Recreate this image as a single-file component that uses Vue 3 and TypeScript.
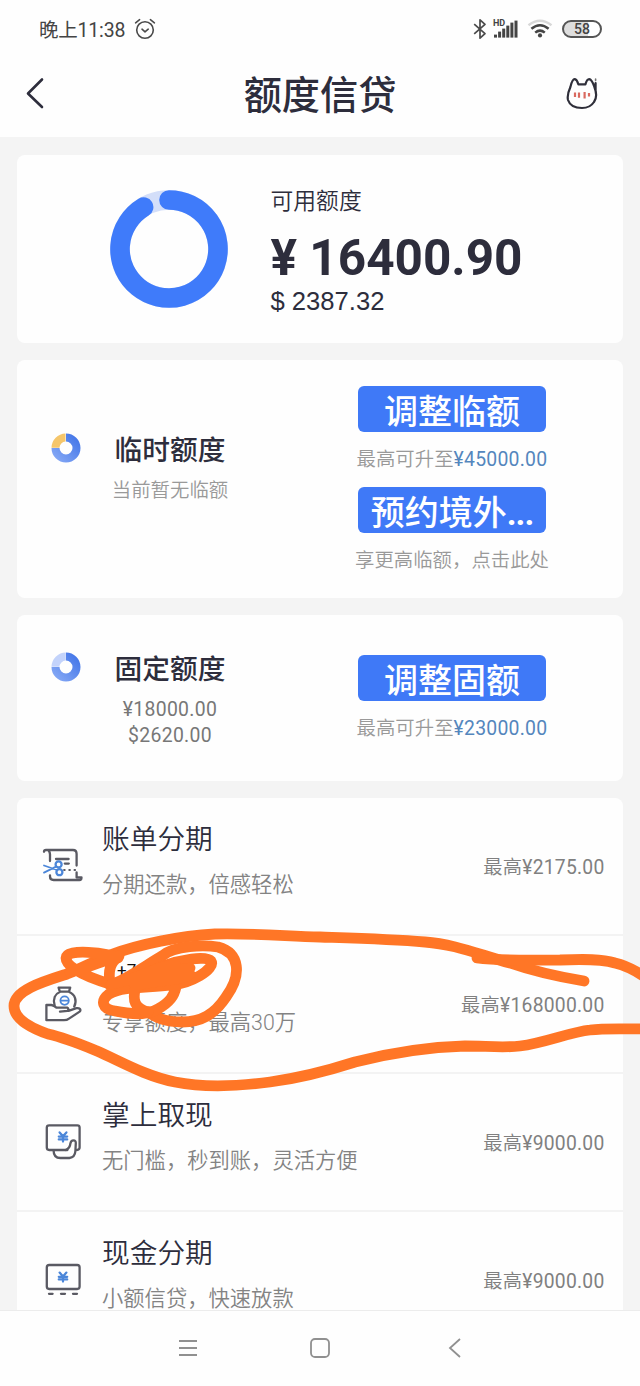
<script setup lang="ts">
interface Product {
  icon: 'bill' | 'bag' | 'cash' | 'card'
  title: string
  note: string
  limit: string
  masked?: boolean
}

const products: Product[] = [
  { icon: 'bill', title: '账单分期', note: '分期还款，倍感轻松', limit: '¥2175.00' },
  { icon: 'bag', title: '+7', note: '专享额度，最高30万', limit: '¥168000.00', masked: true },
  { icon: 'cash', title: '掌上取现', note: '无门槛，秒到账，灵活方便', limit: '¥9000.00' },
  { icon: 'card', title: '现金分期', note: '小额信贷，快速放款', limit: '¥9000.00' },
]
const signalBars = [3, 6, 9, 12, 15, 17]
</script>

<template>
  <div class="screen">
    <header class="top">
      <div class="status">
        <div class="clock">
          <span>晚上11:38</span>
          <svg width="22" height="22" viewBox="0 0 22 22" fill="none" stroke="#4a4a4a" stroke-width="1.6" stroke-linecap="round" stroke-linejoin="round">
            <circle cx="11" cy="12" r="8.3" />
            <path d="M1.6 4.8 5.6 1.7M20.4 4.8 16.4 1.7M8 11.2l3 2.6 3.2-2.6" />
          </svg>
        </div>
        <div class="signals">
          <svg class="bt" width="14" height="22" viewBox="0 0 14 22" fill="none" stroke="#4a4a4a" stroke-width="1.7" stroke-linejoin="round">
            <path d="M1.2 6.2 12 15.6 7 20.2V1.8l5 4.6L1.2 15.8" />
          </svg>
          <div class="cell">
            <span class="hd">HD</span>
            <svg width="26" height="20" viewBox="0 0 26 20" fill="#444">
              <rect v-for="(h, i) in signalBars" :key="i" :x="1 + i * 4.1" :y="18.6 - h" width="3" :height="h" />
            </svg>
          </div>
          <svg class="wifi" width="26" height="20" viewBox="0 0 26 20" fill="none" stroke-width="2.5">
            <path d="M1.5 6.2Q13-2.6 24.5 6.2" stroke="#d8d8d8" />
            <path d="M4.4 9.8Q13 2.8 21.6 9.8M8.2 13.6Q13 9.6 17.8 13.6" stroke="#444" />
            <circle cx="13" cy="16.4" r="2.1" fill="#444" />
          </svg>
          <div class="battery">58</div>
        </div>
      </div>
      <div class="nav">
        <svg width="20" height="34" viewBox="0 0 20 34" fill="none" stroke="#2d2d3c" stroke-width="2.6" stroke-linecap="round" stroke-linejoin="round">
          <path d="M17 3.5 3 17.5 17 31" />
        </svg>
        <h1>额度信贷</h1>
        <svg width="34" height="34" viewBox="0 0 34 34" fill="none" stroke="#2f2f3a" stroke-width="2.2" stroke-linecap="round" stroke-linejoin="round">
          <path d="M30.6 7V15M29.4 11C31.4 16 31.8 22 29 26 26 30.6 21 32 17 32 11 32 5 30 3 24 1.8 19 3.6 15 5.4 11 6.6 6 8.2 3 9.8 3.2 12 3.6 12.6 6 13.4 8.4H20.4C21.2 5.6 22.2 3.2 24.2 3.2 26.8 3.4 28 7 29.4 11" />
          <path d="M30.6 3V4.6" stroke-width="1.6" stroke="#777" />
          <path d="M10 16.5v4.4M14 16.5v5.2M19.6 16v6.4M24 17v3.6" stroke="#d9695f" stroke-width="2.2" stroke-linecap="butt" />
        </svg>
      </div>
    </header>

    <main class="content">
      <section class="card available">
        <svg class="ring" width="120" height="120" viewBox="0 0 120 120" fill="none" stroke-width="19.6">
          <circle cx="60" cy="60" r="49" stroke="#d3def9" />
          <path d="M60 11A49 49 0 1 1 34.6 18.1" stroke="#3f7bfa" stroke-linecap="round" />
        </svg>
        <div class="sums">
          <div class="label">可用额度</div>
          <div class="amount">¥ 16400.90</div>
          <div class="usd">$ 2387.32</div>
        </div>
      </section>

      <section class="card quota temp">
        <svg class="pie" width="30" height="30" viewBox="0 0 30 30">
          <defs>
            <linearGradient id="pieBlue" x1="1" y1="0" x2="0" y2="1">
              <stop offset="0" stop-color="#3a6fe6" />
              <stop offset="1" stop-color="#8eaff7" />
            </linearGradient>
          </defs>
          <path d="M15 .5A14.5 14.5 0 1 1 .5 15H8.5A6.5 6.5 0 1 0 15 8.5Z" fill="url(#pieBlue)" />
          <path d="M14.5 .5A14.5 14.5 0 0 0 .5 14.8H8.5A6.5 6.5 0 0 1 14.5 8.5Z" fill="#f5c66b" />
        </svg>
        <div class="kind">
          <h2>临时额度</h2>
          <p class="soft">当前暂无临额</p>
        </div>
        <div class="actions">
          <button>调整临额</button>
          <p>最高可升至<b>¥45000.00</b></p>
          <button>预约境外<span class="dots">...</span></button>
          <p>享更高临额，点击此处</p>
        </div>
      </section>

      <section class="card quota fixed">
        <svg class="pie" width="30" height="30" viewBox="0 0 30 30">
          <path d="M15 .5A14.5 14.5 0 1 1 .5 15H8.5A6.5 6.5 0 1 0 15 8.5Z" fill="url(#pieBlue)" />
          <path d="M14.8 .5A14.5 14.5 0 0 0 .5 14.8H8.5A6.5 6.5 0 0 1 14.8 8.5Z" fill="#c3d3fb" />
        </svg>
        <div class="kind">
          <h2>固定额度</h2>
          <p class="num">¥18000.00</p>
          <p class="num">$2620.00</p>
        </div>
        <div class="actions">
          <button>调整固额</button>
          <p>最高可升至<b>¥23000.00</b></p>
        </div>
      </section>

      <section class="card list">
        <div v-for="p in products" :key="p.icon" class="row">
          <svg class="icon" width="42" height="42" viewBox="0 0 42 42" fill="none" stroke="#5a5a63" stroke-width="2.3" stroke-linecap="round" stroke-linejoin="round">
            <template v-if="p.icon === 'bill'">
              <path d="M2 7.8Q2 6 4 6H31Q34.6 6 34.6 10V21.5M6.5 6.5Q8 8 8 10.5V17M8 31.4V32.5Q8 36 11.6 36H37.5Q39.5 36 39.5 33.4H34.6V28.5M14 15H26.6M22.8 19.6H26.8" />
              <path d="M22 26h12" stroke-dasharray=".8 4.4" stroke-width="1.8" />
              <path d="M2 21.5 15 26M2 28.6 14.6 22.4" stroke="#4b86d9" stroke-width="1.8" />
              <circle cx="16.6" cy="20.4" r="3" stroke="#4b86d9" />
              <circle cx="17.4" cy="28.2" r="3" stroke="#4b86d9" />
            </template>
            <template v-else-if="p.icon === 'bag'">
              <path d="M16.6 5.6H28.2L27 9.6H17.8ZM17.8 10C13 12 10.8 17 12.6 23.4M27.2 10C33.2 12.4 35.2 19 32.2 24.6" />
              <circle cx="22.6" cy="18.6" r="4.2" stroke="#4b86d9" stroke-width="1.8" />
              <path d="M19.2 18.6h7" stroke="#4b86d9" stroke-width="1.8" />
              <path d="M18 29.6 25.4 28.8Q27.6 27 25 25.6H14.4Q12 23.4 9.4 23H4.4V38.2H22Q25 38.2 27 36.6L38 29.4Q39.6 25.8 34.4 26.2L26.6 28.8" />
            </template>
            <template v-else-if="p.icon === 'cash'">
              <path d="M25.4 30H7.2Q4.8 30 4.8 27.6V7.6Q4.8 5.4 7.2 5.4H35.4Q37.6 5.4 37.6 7.6V27.6Q37.6 29.8 34.8 30" />
              <path d="M11.6 30.4Q11.6 38 18.4 38H27.4Q33 37.4 33.4 31L33.8 23.4Q34 20.4 31.4 20.4 29 20.4 28.4 23.4 28 28.6 23.6 30" />
              <path class="yen" d="m17.6 12.4 3.4 3.8 3.4-3.8M16.8 16.6h8.4M16.8 19.4h8.4M21 16.6v5" />
            </template>
            <template v-else>
              <rect x="4.8" y="7" width="32.8" height="24" rx="2.4" />
              <path d="M7 35.8h3.6M19 35.8h4M31 35.8h4" />
              <path class="yen" d="m17.6 14.6 3.4 3.8 3.4-3.8M16.8 18.8h8.4M16.8 21.4h8.4M21 18.6v5" />
            </template>
          </svg>
          <div class="text">
            <h3 :class="{ masked: p.masked }">{{ p.title }}</h3>
            <p>{{ p.note }}</p>
          </div>
          <div class="limit">最高<b>{{ p.limit }}</b></div>
        </div>
      </section>
    </main>

    <footer class="system">
      <svg width="20" height="22" viewBox="0 0 20 22" stroke="#909090" stroke-width="1.8"><path d="M1 4h18M1 11h18M1 18h18" /></svg>
      <svg width="20" height="20" viewBox="0 0 20 20" fill="none" stroke="#909090" stroke-width="1.8"><rect x="1" y="1" width="18" height="18" rx="4" /></svg>
      <svg width="14" height="22" viewBox="0 0 14 22" fill="none" stroke="#909090" stroke-width="1.8"><path d="M12 2 2 11l10 9" /></svg>
    </footer>

    <svg class="ink" width="640" height="180" viewBox="0 920 640 180" fill="none" stroke="#ff7626" stroke-width="10.8" stroke-linecap="round" stroke-linejoin="round">
      <path d="M584 981C560 977 530 970 510 963C480 955 455 944 425 942C390 939 350 938 320 937C285 936 250 933 215 934C180 936 140 944 110 955C95 961 82 968 67 974C45 981 14 990 14 1006C14 1018 28 1027 48 1034C66 1038 80 1044 97 1051C120 1061 145 1076 175 1082C205 1088 240 1086 270 1082C300 1078 330 1070 355 1062C390 1053 430 1047 465 1046C485 1046 505 1048 520 1046C545 1043 570 1032 590 1030C605 1028 625 1029 646 1029" />
      <path d="M477 958C500 961 530 960 560 960C585 959 602 959 615 963C628 966 638 972 648 979" />
      <path d="M70 972C98 966 101 959 118 958C108 953 66 948 66 958C66 968 90 978 110 984C108 970 110 963 119 956" />
      <path d="M110 985C125 981 145 966 162 956C174 945 205 945 218 947C240 953 242 975 226 997C214 1015 201 1022 182 1022C165 1022 157 1018 148 1012" />
      <path d="M111 985C135 985 145 972 163 966C180 960 206 955 211 961C216 969 190 984 171 985C150 988 123 986 109 994C100 1001 102 1009 115 1011C130 1014 146 1016 158 1009C170 1002 174 996 176 987" />
      <path d="M112 984C137 980 155 967 175 964C158 977 138 980 135 990C133 1000 134 1008 148 1012M135 985C158 980 180 981 190 974M140 978C155 968 175 972 190 968" />
    </svg>
  </div>
</template>

<style>
html,
body {
  margin: 0;
  background: #f4f4f4;
}
</style>

<style scoped>
.screen {
  position: relative;
  width: 640px;
  height: 1386px;
  overflow: hidden;
  display: flex;
  flex-direction: column;
  background: #f4f4f4;
  color: #2d2d3c;
  font-family: Roboto, "Noto Sans CJK SC", sans-serif;
}
h1, h2, h3, p { margin: 0; font-weight: 500; }
svg { display: block; flex: none; }
.top { flex: none; height: 137px; background: #fefefe; }
.status {
  display: flex;
  justify-content: space-between;
  align-items: center;
  height: 50px;
  padding: 8px 38px 0 39px;
  box-sizing: border-box;
  color: #444;
}
.clock { display: flex; align-items: center; gap: 9px; font-size: 19.5px; letter-spacing: -.2px; }
.clock span { margin-top: -2px; }
.signals { display: flex; align-items: center; }
.cell { display: flex; position: relative; margin-left: 6px; }
.hd { position: absolute; left: 0; top: 0; font-size: 9px; line-height: 9px; font-weight: 700; }
.wifi { margin-left: 8px; }
.battery {
  margin-left: 9px;
  width: 40px;
  height: 18px;
  box-sizing: border-box;
  border: 2px solid #555;
  border-radius: 9px;
  background: linear-gradient(90deg, #dedede 68%, #fff 68%);
  font-size: 14px;
  font-weight: 500;
  line-height: 15px;
  text-align: center;
}
.nav { display: flex; justify-content: space-between; align-items: center; height: 86px; padding: 0 41px 0 25px; }
.nav h1 { font-size: 38.2px; line-height: 50px; margin: 5px 0 0 30px; }
.content { flex: 1; min-height: 0; overflow: hidden; padding: 18px 17px 0; }
.card { background: #fefefe; border-radius: 8px; margin-bottom: 17px; box-sizing: border-box; }
.available { display: flex; height: 188px; padding: 34px 0 0 92px; }
.sums { margin-left: 41.5px; }
.label { font-size: 22.8px; line-height: 26px; font-weight: 350; }
.amount { font-size: 49.5px; font-weight: 700; line-height: 60px; margin-top: 13px; white-space: pre; }
.usd { font-family: "Liberation Sans", sans-serif; font-size: 25.6px; line-height: 30px; margin-top: -2px; }
.quota { display: flex; }
.temp { height: 238px; padding: 26px 0 0 34px; }
.fixed { height: 166px; padding: 40px 0 0 34px; }
.temp .pie { margin-top: 47px; }
.fixed .pie { margin-top: -3px; }
.kind { width: 140px; margin-left: 19px; text-align: center; }
.temp .kind { padding-top: 47px; }
h2 { font-size: 27.7px; line-height: 36px; }
.fixed h2 { margin-top: -3px; }
.kind p { font-size: 19.4px; font-weight: 400; }
.kind p.soft { color: #999; line-height: 26px; margin-top: 9px; font-weight: 350; }
.num { color: #777; line-height: 26px; letter-spacing: .3px; }
.fixed .num:nth-child(2) { margin-top: 9px; }
.actions { width: 210px; margin-left: 107px; text-align: center; }
button {
  display: block;
  width: 188px;
  height: 46px;
  margin: 0 auto;
  padding: 2px 0 0;
  border: 0;
  border-radius: 6px;
  background: #3f79f7;
  color: #fff;
  font: 500 34px/48px Roboto, "Noto Sans CJK SC", sans-serif;
}
.dots { font-weight: 700; letter-spacing: -1px; }
.actions p { font-size: 19.4px; line-height: 26px; font-weight: 350; color: #999; padding: 15px 0 14px; white-space: nowrap; }
.actions b { font-weight: 400; color: #5486bd; letter-spacing: .25px; }
.list { margin: 0; }
.row { display: flex; height: 138px; box-sizing: border-box; border-bottom: 2px solid #f3f3f3; padding: 0 18.5px 0 25px; }
.icon { margin-top: 46px; }
.text { flex: 1; margin-left: 18px; }
h3 { font-size: 27.7px; line-height: 36px; font-weight: 350; padding-top: 24px; }
h3.masked { font-size: 17px; font-weight: 400; line-height: 20px; height: 20px; padding: 24px 0 16px 15px; color: #111; }
.text p { font-size: 21.3px; line-height: 28px; font-weight: 350; color: #838383; margin-top: 13px; }
.limit { font-size: 19.3px; line-height: 28px; font-weight: 350; margin-top: 56px; color: #808080; letter-spacing: .25px; }
.limit b { font-weight: 400; }
.yen { stroke: #4b86d9; }
.system {
  flex: none;
  height: 76px;
  box-sizing: border-box;
  border-top: 1px solid #ececec;
  background: #fefefe;
  display: grid;
  grid-template-columns: 20px 20px 14px;
  column-gap: 112px;
  align-items: center;
  padding: 0 0 2px 178px;
}
.system svg:last-child { margin-left: 6px; }
.ink { position: absolute; left: 0; top: 920px; }
</style>
